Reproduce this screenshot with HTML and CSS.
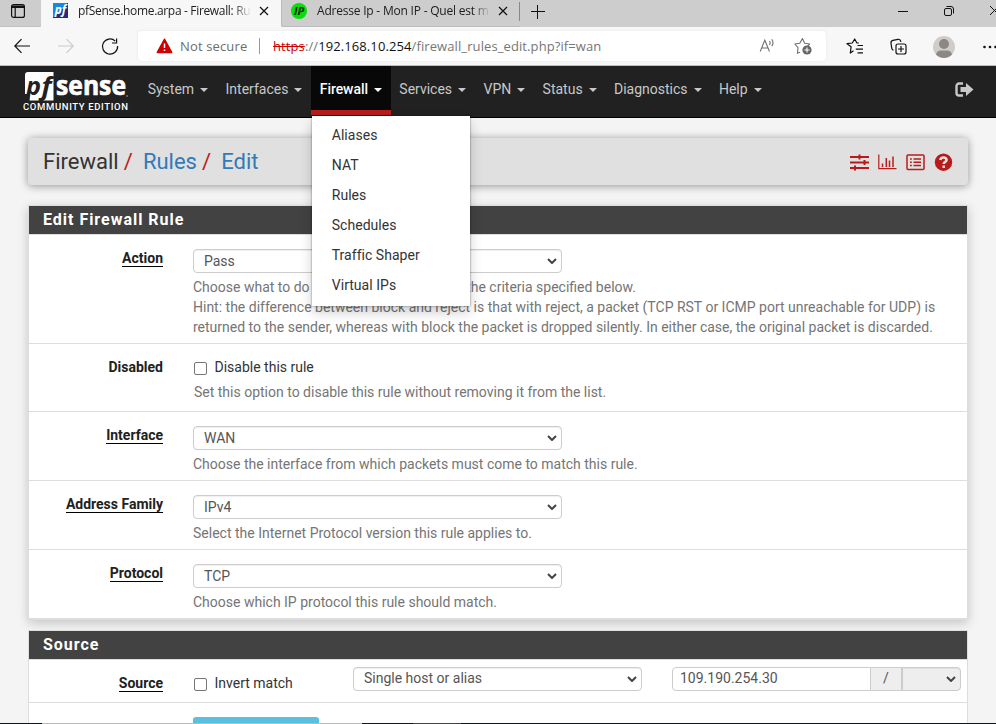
FILE: index.html
```html
<!DOCTYPE html>
<html lang="en">
<head>
<meta charset="utf-8">
<title>pfSense.home.arpa - Firewall: Rules: Edit</title>
<link rel="stylesheet" href="styles.css">
</head>
<body>
<div class="tabs">
  <div class="tab-actions"><svg width="16" height="16" viewBox="0 0 16 16" fill="none" stroke="#111" stroke-width="1.2"><rect x="1.6" y="1.6" width="12.8" height="12.8" rx="2"/><path d="M1.6 3.2h12.8M1.6 4.4h12.8M5.2 4v10"/></svg></div>
  <div class="tab active">
    <span class="fav pf">pf</span><span class="tab-title t1">pfSense.home.arpa - Firewall: Rules: Edit</span>
    <svg class="x" width="10" height="10" viewBox="0 0 10 10" stroke="#111" stroke-width="1.2"><path d="M1 1l8 8M9 1l-8 8"/></svg>
  </div>
  <div class="tab second">
    <span class="fav ip">IP</span><span class="tab-title t2">Adresse Ip - Mon IP - Quel est mon IP</span>
    <svg class="x" width="10" height="10" viewBox="0 0 10 10" stroke="#111" stroke-width="1.2"><path d="M1 1l8 8M9 1l-8 8"/></svg>
  </div>
  <svg class="plus" width="14" height="14" viewBox="0 0 14 14" stroke="#111"><path d="M0 6.500h14M6.500 0v14"/></svg>
  <div class="winbtns">
    <svg width="98" height="14" viewBox="0 0 98 14" fill="none" stroke="#111"><path d="M0 7.500h10"/><rect x="46.500" y="4.500" width="7" height="7" rx="1.500"/><path d="M48.500 2.500h4.500a2.500 2.500 0 0 1 2.500 2.500v4.500M92 2l9 9M92 11l9-9"/></svg>
  </div>
</div>
<div class="toolbar">
  <svg class="arrows" width="106" height="20" viewBox="0 0 106 20" fill="none" stroke="#111" stroke-width="1.2"><path d="M16 10H.8M7.500 3.200L.8 10l6.700 6.800"/><path stroke="#ccc" d="M44 10h15M52.500 3.200l6.700 6.800-6.700 6.800"/><path d="M101.200 5A7.600 7.600 0 1 0 103.600 10M102.600 2.500V7H98"/></svg>
  <div class="address">
    <svg width="17" height="16" viewBox="0 0 17 16"><path d="M8.500 1.300L15.600 14.500H1.400z" fill="#c00" stroke="#c00" stroke-width="1.600" stroke-linejoin="round"/><path d="M8.500 5.500v4.500M8.500 11.500v1.500" stroke="#fff" stroke-width="1.500"/></svg>
    <span class="notsec">Not secure</span><i class="bar"></i>
    <span class="url"><s>https</s>://<b>192.168.10.254</b>/firewall_rules_edit.php?if=wan</span>
    <svg class="read" width="54" height="20" viewBox="0 0 54 20" fill="none" stroke="#707070" stroke-width="1.100"><path d="M1.200 15.500L5.800 4.300l4.700 11.200M2.700 12h6.200M10.500 5q1.300 1.500 0 4M12.800 3.300q2.400 3.500 0 7"/><path stroke-linejoin="round" d="M41 16.300L38.400 17.300 39 11.700 35.800 8l5-.7 2.600-4.800 2.300 4.800 5 .7-2 2"/><circle cx="48" cy="14" r="4.600" fill="#666" stroke="none"/><path stroke="#fff" d="M45.500 14h5M48 11.500v5"/></svg>
  </div>
  <svg class="tools" width="153" height="24" viewBox="0 0 153 24" fill="none" stroke="#111" stroke-width="1.200">
    <path stroke-linejoin="round" d="M7.500 15.700L4.300 18l.8-6.200L1 8.700l5.300-.7L8.700 4l2.200 4h2M11.500 10.500h5.500M9.800 14.200H17M11.500 17.800H17"/>
    <path d="M47.500 15.300c-1-.5-1.500-1.200-1.700-2l-.8-5c-.3-1.700.5-2.500 1.900-2.900l5-1.100c1.800-.3 2.500.3 3 2.500"/><rect x="50" y="9" width="10" height="10" rx="2"/><path d="M55 11v6M52 14h6"/>
    <g stroke="none"><circle cx="98" cy="12" r="11" fill="#cfcdca"/><circle cx="98" cy="9" r="5" fill="#8b8784"/><path d="M90 19.500q1-4 5-4h6q4 0 5 4a11 11 0 0 1-16 0" fill="#8b8784"/><g fill="#111"><circle cx="138.500" cy="12" r="1.300"/><circle cx="144" cy="12" r="1.300"/><circle cx="149.500" cy="12" r="1.300"/></g></g>
  </svg>
</div>
<nav class="navbar">
  <div class="brand">
    <svg width="106" height="41" viewBox="0 0 106 41"><path d="M2 4Q2 1 5 1H30.500V29.500H6.500V23H2z" fill="#fff"/><text x="3" y="23.500" class="lg lp" textLength="15" lengthAdjust="spacingAndGlyphs">p</text><text x="18.500" y="23.500" class="lg lp" textLength="10" lengthAdjust="spacingAndGlyphs">f</text><text x="33" y="24" class="lg ls" textLength="70" lengthAdjust="spacingAndGlyphs">sense</text><circle cx="104" cy="25" r=".8" fill="#aaa"/><text x="0" y="38.500" class="lce" textLength="105">COMMUNITY EDITION</text></svg>
  </div>
  <ul class="menu">
    <li>System</li><li>Interfaces</li>
    <li class="open">Firewall<div class="dropdown"><a>Aliases</a><a>NAT</a><a>Rules</a><a>Schedules</a><a>Traffic Shaper</a><a>Virtual IPs</a></div></li>
    <li>Services</li><li>VPN</li><li>Status</li><li>Diagnostics</li><li>Help</li>
  </ul>
  <svg class="logout" width="19" height="16" viewBox="0 0 19 16"><path d="M8 1.500H4A2.500 2.500 0 0 0 1.500 4v7A2.500 2.500 0 0 0 4 13.500h4" fill="none" stroke="#c8c8c8" stroke-width="2.400"/><path d="M5.500 5H11V1l7.500 6.500L11 14v-4H5.500z" fill="#c8c8c8"/></svg>
</nav>
<main>
  <header class="crumbs">
    <span>Firewall</span><em>/</em><a>Rules</a><em>/</em><a>Edit</a>
    <svg width="103" height="18" viewBox="0 0 103 18" fill="none" stroke="#b71c1c" stroke-width="2"><path d="M0 4h19M0 9.500h19M0 15h19"/><path d="M9.500 1.500v5M14.500 7v5M5 12.500v5"/><path stroke-width="1.200" d="M28.800 1.500v14.200H46.500"/><path stroke-width="1.500" d="M32.500 10.500v3.500M36.300 5v9M39.500 7.500V14M43 3.500V14"/><rect x="57" y="2" width="17" height="14.500" rx="1" stroke-width="1.500"/><path stroke-width="1.500" d="M60 6h1.800M60 9.300h1.800M60 12.600h1.800M63.500 6H71M63.500 9.300H71M63.500 12.600H71"/><circle cx="93.500" cy="9.200" r="8.700" fill="#b71c1c" stroke="none"/><path stroke="#e3e3e3" stroke-width="2.500" d="M90.300 7Q90.700 4.500 93.500 4.500T96.600 7C96.600 9 93.700 8.700 93.700 11M93.700 12.500V15"/></svg>
  </header>
  <section class="panel">
    <h2>Edit Firewall Rule</h2>
    <div class="row r1"><div class="label"><u>Action</u></div><div class="field"><div class="select">Pass<svg class="chev" viewBox="0 0 10 6"><path d="M1 1l4 4 4-4"/></svg></div><p>Choose what to do with packets that match the criteria specified below.<br>Hint: the difference between block and reject is that with reject, a packet (TCP RST or ICMP port unreachable for UDP) is<br>returned to the sender, whereas with block the packet is dropped silently. In either case, the original packet is discarded.</p></div></div>
    <div class="row r2"><div class="label">Disabled</div><div class="field"><label class="check"><i></i>Disable this rule</label><p>Set this option to disable this rule without removing it from the list.</p></div></div>
    <div class="row"><div class="label"><u>Interface</u></div><div class="field"><div class="select">WAN<svg class="chev" viewBox="0 0 10 6"><path d="M1 1l4 4 4-4"/></svg></div><p>Choose the interface from which packets must come to match this rule.</p></div></div>
    <div class="row"><div class="label"><u>Address Family</u></div><div class="field"><div class="select">IPv4<svg class="chev" viewBox="0 0 10 6"><path d="M1 1l4 4 4-4"/></svg></div><p>Select the Internet Protocol version this rule applies to.</p></div></div>
    <div class="row"><div class="label"><u>Protocol</u></div><div class="field"><div class="select">TCP<svg class="chev" viewBox="0 0 10 6"><path d="M1 1l4 4 4-4"/></svg></div><p>Choose which IP protocol this rule should match.</p></div></div>
  </section>
  <section class="panel source">
    <h2>Source</h2>
    <div class="row r6"><div class="label"><u>Source</u></div>
      <label class="check"><i></i>Invert match</label>
      <div class="select host">Single host or alias<svg class="chev" viewBox="0 0 10 6"><path d="M1 1l4 4 4-4"/></svg></div>
      <div class="group"><span class="addr">109.190.254.30</span><span class="slash">/</span><div class="select mask"><svg class="chev" viewBox="0 0 10 6"><path d="M1 1l4 4 4-4"/></svg></div></div>
    </div>
    <div class="advanced"></div>
  </section>
</main>
<div class="taskbar"></div>
</body>
</html>
```
FILE: styles.css
```css
* { box-sizing: border-box; }
body { margin: 0; width: 996px; height: 724px; overflow: hidden; position: relative; background: #f4f4f4; font: 14px/20px Roboto, sans-serif; color: #212121; white-space: nowrap; }
svg { display: block; flex: none; }

.tabs { height: 27px; display: flex; background: #cdcdcd; font: 12px/22px "Open Sans", "Noto Sans", sans-serif; overflow: hidden; }
.tab-actions { width: 41px; padding: 3px 0 0 10px; border-bottom: 1px solid #c0c0c0; border-radius: 0 0 4px 0; }
.tab { display: flex; position: relative; }
.tab.active { width: 240px; padding-left: 12px; background: #f7f7f7; }
.tab.second { width: 239px; padding-left: 9px; border-left: 1px solid #bbb; border-bottom: 1px solid #bbb; border-radius: 0 0 0 4px; }
.fav { width: 15px; height: 15px; margin-top: 3px; text-align: center; font: italic bold 12px/13px "Open Sans", sans-serif; }
.pf { background: linear-gradient(135deg, #1688e0 50%, #232c82 50%); color: #fff; }
.ip { width: 16px; height: 16px; border-radius: 50%; background: #0bdc0b; color: #052005; font-size: 11px; line-height: 16px; }
.tab-title { overflow: hidden; -webkit-mask-image: linear-gradient(90deg, #000 90%, transparent 100%); mask-image: linear-gradient(90deg, #000 90%, transparent 100%); }
.t1 { width: 173px; margin-left: 10px; letter-spacing: -.33px; }
.t2 { width: 173px; margin-left: 10px; letter-spacing: -.21px; }
.x { margin: 6px 0 0 8px; }
.plus { margin: 5px 0 0 11px; }
.tab.second::after { content: ""; position: absolute; right: 0; top: 2px; width: 1px; height: 19px; background: #888; }
.winbtns { margin: 4px 0 0 auto; }

.toolbar { height: 39px; display: flex; background: #f7f7f7; border-bottom: 1px solid #bdbdbd; }
.arrows { margin: 9px 0 0 14px; width: 106px; }
.address { display: flex; flex: none; width: 688px; height: 30px; margin: 4px 0 0 18px; padding: 0 13px 0 18px; background: #fff; border-radius: 4px; font: 13px/30px "Open Sans", "Noto Sans", sans-serif; color: #767676; box-shadow: 0 0 3px #e5e5e5; }
.address > svg:first-child { margin-top: 7px; }
.notsec { width: 79px; margin-left: 7px; color: #6d6d6d; letter-spacing: .14px; }
.bar { width: 1px; height: 16px; margin: 7px 0 0; background: #999; }
.url { margin-left: 13px; letter-spacing: .1px; }
.url s { color: #c00; }
.url b { font-weight: 400; color: #111; }
.address .read { margin: 5px 0 0 auto; }
.tools { margin: 8px 0 0 20px; }

.navbar { height: 52px; display: flex; background: #212121; border-bottom: 1px solid #000; color: #c8c8c8; }
.brand { width: 139px; padding: 5px 0 0 23px; flex: none; }
.lg { font-family: "Open Sans", sans-serif; font-weight: 700; }
.lp { font-size: 25px; font-style: italic; fill: #212121; }
.ls { font-size: 27px; fill: #fff; stroke: #fff; stroke-width: .7; }
.lce { font: 500 9.5px Roboto, sans-serif; fill: #fff; }
.menu { display: flex; list-style: none; margin: 0; padding: 0; }
.menu li { position: relative; height: 49px; padding: 0 8.7px; line-height: 47px; }
.menu li::after { content: ""; display: inline-block; border: 4px solid transparent; border-top-color: currentColor; border-bottom: 0; margin-left: 6px; vertical-align: 2px; }
.menu .open { background: #080808; color: #fff; border-bottom: 5px solid #b71c1c; font-weight: 500; letter-spacing: -.06px; }
.dropdown { position: absolute; z-index: 5; left: .7px; top: 50px; width: 158px; height: 190px; padding: 4px 0; background: #fff; color: #333; font-weight: 400; letter-spacing: .03px; box-shadow: 0 6px 12px #0003, 0 0 2px #0007; }
.dropdown a { display: block; line-height: 31px; height: 30px; padding-left: 20px; }
.logout { margin: 16px 22px 0 auto; }

main { padding: 20px 28px 0; }
.crumbs { display: flex; height: 47px; margin-bottom: 20px; padding: 0 15px 0 15px; border-radius: 4px; background: #e0e0e0; box-shadow: 0 1px 8px #0006; font-size: 22px; line-height: 47px; color: #333; }
.crumbs a { color: #337ab7; }
.crumbs em { font-style: normal; color: #b71c1c; width: 19.3px; margin-left: 5px; }
.crumbs svg { margin: 15px 0 0 auto; }

.panel { margin-top: 0; border: 1px solid #ddd; background: #fff; box-shadow: 0 3px 10px #0003; }
.panel h2 { margin: 0; height: 29px; padding-left: 14px; background: #424242; color: #fff; font: 700 16px/28px Roboto, sans-serif; letter-spacing: .98px; border-bottom: 1px solid #ddd; }
.row { display: flex; height: 69px; border-bottom: 1px solid #ddd; }
.r1 { height: 109px; }
.r2 { height: 68px; }
.label { width: 134px; margin-right: 30px; padding-top: 13px; text-align: right; font-weight: 700; flex: none; }
.label u { text-decoration: none; border-bottom: 1px solid #000; }
.field { padding-top: 14px; }
.field p { margin: 4px 0 0; color: #757575; }
.select { position: relative; width: 369px; height: 24px; border: 1px solid #ccc; border-radius: 4px; padding-left: 10px; line-height: 23px; color: #555; background: #fff; box-shadow: inset 0 1px 1px #0001; }
.chev { position: absolute; right: 4px; top: 8px; width: 10px; height: 6px; fill: none; stroke: #444; stroke-width: 2; }
.check { display: flex; color: #333; }
.check i { width: 13px; height: 13px; border: 1px solid #767676; border-radius: 2px; margin: 5px 7.500px 0 1px; }
.r2 .check { margin-top: -1px; }
.r2 p { margin: 5px 0 0 1px; }
.source { margin-top: 10px; height: 110px; box-shadow: none; }
.r6 { height: 43px; }
.r6 .check { width: 160px; padding-top: 13px; }
.r6 .select { margin-top: 7px; width: 289px; line-height: 21px; }
.group { display: flex; margin-left: 30px; }
.addr, .slash { height: 24px; margin-top: 7px; border: 1px solid #ccc; line-height: 21px; color: #555; }
.addr { width: 199px; padding-left: 7px; border-radius: 4px 0 0 4px; }
.slash { width: 31px; background: #eee; text-align: center; border-left: 0; }
.group .mask { width: 59px; background: #eee; border-radius: 0 4px 4px 0; }
.advanced { width: 126px; height: 30px; margin: 14px 0 0 164px; background: #5bc0de; border-radius: 3px; }
.taskbar { position: absolute; left: 0; right: 0; top: 723px; height: 1px; background: linear-gradient(90deg, #06181b 42px, #bbb 42px 362px, #101719 362px 413px, #444 413px 461px, #06181b 461px); }
```
